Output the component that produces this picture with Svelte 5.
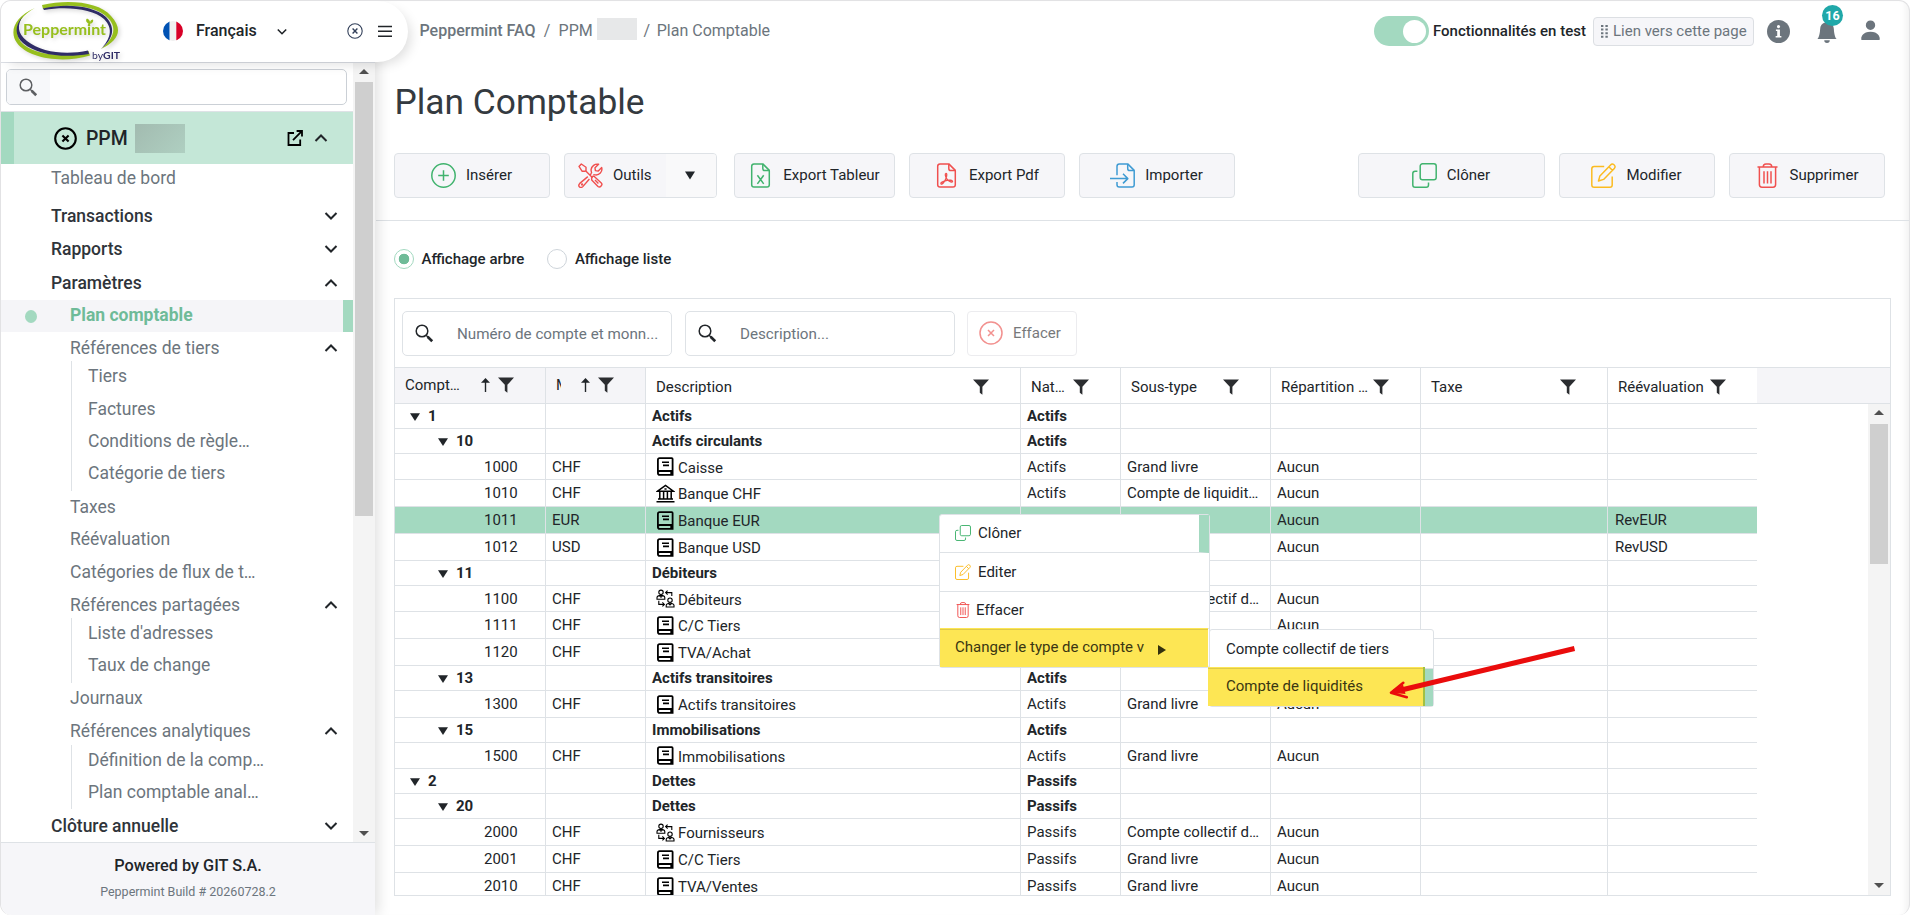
<script>
  const menu = [
    { t: 'Tableau de bord', k: 'first' },
    { t: 'Transactions', k: 'top', c: 'down' },
    { t: 'Rapports', k: 'top', c: 'down' },
    { t: 'Paramètres', k: 'top', c: 'up' },
    { t: 'Plan comptable', k: 'sub active' },
    { t: 'Références de tiers', k: 'sub parent', c: 'up', kids: ['Tiers', 'Factures', 'Conditions de règle…', 'Catégorie de tiers'] },
    { t: 'Taxes', k: 'sub' },
    { t: 'Réévaluation', k: 'sub' },
    { t: 'Catégories de flux de t…', k: 'sub' },
    { t: 'Références partagées', k: 'sub parent', c: 'up', kids: ["Liste d'adresses", 'Taux de change'] },
    { t: 'Journaux', k: 'sub' },
    { t: 'Références analytiques', k: 'sub parent', c: 'up', kids: ['Définition de la comp…', 'Plan comptable anal…'] },
    { t: 'Clôture annuelle', k: 'top last', c: 'down' }
  ];

  const leftButtons = [
    { t: 'Insérer', i: 'plus', k: '' },
    { t: 'Outils', i: 'tools', k: 'split' },
    { t: 'Export Tableur', i: 'xls', k: 'wide' },
    { t: 'Export Pdf', i: 'pdf', k: '' },
    { t: 'Importer', i: 'import', k: '' }
  ];
  const rightButtons = [
    { t: 'Clôner', i: 'copy', k: 'wider' },
    { t: 'Modifier', i: 'edit', k: '' },
    { t: 'Supprimer', i: 'trash', k: '' }
  ];

  const columns = [
    { t: 'Compt…', k: 'sorted code' },
    { t: 'M', k: 'sorted cur' },
    { t: 'Description', k: '' },
    { t: 'Nat…', k: '' },
    { t: 'Sous-type', k: '' },
    { t: 'Répartition …', k: '' },
    { t: 'Taxe', k: '' },
    { t: 'Réévaluation', k: '' }
  ];

  const g = (level, code, desc, nat) => ({ level, code, cur: '', desc, nat, sub: '', rep: '', rev: '', h: 25 });
  const a = (code, cur, icon, desc, nat, sub, h = 27, rev = '') => ({ level: 3, code, cur, icon, desc, nat, sub, rep: 'Aucun', rev, h });
  const rows = [
    g(1, '1', 'Actifs', 'Actifs'),
    g(2, '10', 'Actifs circulants', 'Actifs'),
    a('1000', 'CHF', 'book', 'Caisse', 'Actifs', 'Grand livre', 26),
    a('1010', 'CHF', 'bank', 'Banque CHF', 'Actifs', 'Compte de liquidit…'),
    a('1011', 'EUR', 'book', 'Banque EUR', 'Actifs', 'Grand livre', 27, 'RevEUR'),
    a('1012', 'USD', 'book', 'Banque USD', 'Actifs', 'Grand livre', 27, 'RevUSD'),
    g(2, '11', 'Débiteurs', 'Actifs'),
    a('1100', 'CHF', 'people', 'Débiteurs', 'Actifs', 'Compte collectif d…', 26),
    a('1111', 'CHF', 'book', 'C/C Tiers', 'Actifs', 'Grand livre'),
    a('1120', 'CHF', 'book', 'TVA/Achat', 'Actifs', 'Grand livre'),
    g(2, '13', 'Actifs transitoires', 'Actifs'),
    a('1300', 'CHF', 'book', 'Actifs transitoires', 'Actifs', 'Grand livre'),
    g(2, '15', 'Immobilisations', 'Actifs'),
    a('1500', 'CHF', 'book', 'Immobilisations', 'Actifs', 'Grand livre', 26),
    g(1, '2', 'Dettes', 'Passifs'),
    g(2, '20', 'Dettes', 'Passifs'),
    a('2000', 'CHF', 'people', 'Fournisseurs', 'Passifs', 'Compte collectif d…'),
    a('2001', 'CHF', 'book', 'C/C Tiers', 'Passifs', 'Grand livre'),
    a('2010', 'CHF', 'book', 'TVA/Ventes', 'Passifs', 'Grand livre')
  ];
</script>

{#snippet chevron(dir)}
  <svg class="chev" viewBox="0 0 14 10" width="14" height="10"><path d={dir === 'up' ? 'M1.5 8 7 2.5 12.5 8' : 'M1.5 2 7 7.5 12.5 2'} fill="none" stroke="#212529" stroke-width="2" /></svg>
{/snippet}

{#snippet magnifier(color)}
  <svg width="19" height="19" viewBox="0 0 19 19" fill="none" stroke={color}><circle cx="7" cy="7" r="5.8" stroke-width="1.5" /><path d="M11 11.2 13 13" stroke-width="1.4" /><path d="M12.6 12.8 17.2 17.3" stroke-width="2.6" /></svg>
{/snippet}

{#snippet funnel()}
  <svg class="funnel" width="16" height="16" viewBox="0 0 16 16"><path d="M0 0.5H16L9.4 7.8V15.8L6.8 13.8V7.8Z" fill="#2b2d30" /></svg>
{/snippet}

{#snippet icon(name, size)}
  <svg class="ico" width={size} height={size} viewBox="0 0 25 25" fill="none" stroke-width="1.5">
    {#if name === 'plus'}
      <g stroke="#41b36e"><circle cx="12.5" cy="12.5" r="11.7" /><path d="M12.5 7.2V17.8M7.2 12.5H17.8" /></g>
    {:else if name === 'tools'}
      <g stroke="#f0504f" stroke-width="1.4" stroke-linejoin="round">
        <path d="M1 3.4 3.3 1 8 4.3V7.6L6.9 8.3H4.2Z" />
        <path d="M7.8 8 14.6 14.8" />
        <path d="M13.7 15.6C13.2 14 14.3 13 16 13.3L23.3 19.9C25.2 21.8 22 25.2 20 23.4L13.7 17Z" />
        <path d="M17 17 20.4 20.4" />
        <path d="M13.6 10.2 13 6.8C13.6 3 16.8 .6 20.6 1.3L17 4.8 17.4 7.6 20.3 8.1 23.7 4.6C24.8 8.8 21.2 12.5 17.2 11.9L15.3 11.6" />
        <path d="M13.6 10.2 11.9 11.9M9.8 13.6 1.8 20.4C-.8 23.2 2.6 26 4.8 23.6L11.4 16" />
        <circle cx="4.1" cy="21.4" r=".5" />
      </g>
    {:else if name === 'xls'}
      <g stroke="#41b36e" stroke-linejoin="round"><path d="M14.8 .9H6Q3.7 .9 3.7 3.2V21.8Q3.7 24.1 6 24.1H19Q21.3 24.1 21.3 21.8V7.4Z" /><path d="M14.8 .9V5.5Q14.8 7.6 16.8 7.6H21.3" /><path d="M9.4 12.3 15.7 20.9M15.7 12.3 9.4 20.9" /></g>
    {:else if name === 'pdf'}
      <g stroke="#f0504f" stroke-linejoin="round"><path d="M14.8 .9H6Q3.7 .9 3.7 3.2V21.8Q3.7 24.1 6 24.1H19Q21.3 24.1 21.3 21.8V7.4Z" /><path d="M14.8 .9V5.5Q14.8 7.6 16.8 7.6H21.3" /><path stroke-width="1.3" d="M12 10.3C10.6 10.6 11.5 14 12.6 15.6 14 17.8 17.8 20 18.5 18.6 19 17.2 15 16.7 12 17.6 9 18.4 6.2 19.8 7 20.8 8.2 22.2 11 18 12 15.6 12.8 13.4 13.2 10.2 12 10.3Z" /></g>
    {:else if name === 'import'}
      <g stroke="#3f9bd3" stroke-linejoin="round"><path d="M7 12.2V3.2Q7 .9 9.3 .9H17.7L24.2 7.4V21.8Q24.2 24.1 22 24.1H9.3Q7 24.1 7 21.8V19" /><path d="M17.7 .9V5.5Q17.7 7.6 19.7 7.6H24" /><path d="M0 15.6H17.8M13 10.8 17.8 15.6 13 20.4" /></g>
    {:else if name === 'copy'}
      <g stroke="#41b36e"><rect x="8.2" y=".8" width="16" height="16" rx="2.3" /><path d="M5.4 8.3H3.1Q.8 8.3 .8 10.6V21.9Q.8 24.2 3.1 24.2H14.2Q16.5 24.2 16.5 21.9V19.6" /></g>
    {:else if name === 'edit'}
      <g stroke="#fbbb21" stroke-linejoin="round"><path d="M13.2 3.6H3.1Q.8 3.6 .8 5.9V21.9Q.8 24.2 3.1 24.2H18.9Q21.2 24.2 21.2 21.9V13.6" /><path d="M19.6 1.9Q21.2 .2 23 1.8 25 3.6 23.3 5.4L12.6 16.4 7.5 18 8.9 12.9ZM17.8 3.8 21.4 7.3" /></g>
    {:else if name === 'trash'}
      <g stroke="#f0504f"><path d="M2.5 4H22.5M8.2 4Q8.2 .9 11 .9H14Q16.8 .9 16.8 4M4.4 4V21.5Q4.4 24.2 7 24.2H18Q20.6 24.2 20.6 21.5V4" /><path d="M9 8.3V20.4M12.5 8.3V20.4M16 8.3V20.4" /></g>
    {/if}
  </svg>
{/snippet}

{#snippet kind(name)}
  <svg class="kind" width="19" height="19" viewBox="0 0 19 19" fill="none" stroke="#000">
    {#if name === 'book'}
      <path d="M3.6 1.2H15.8Q16.6 1.2 16.6 2V17.8H3.8Q1.9 17.8 1.9 15.9V3Q1.9 1.2 3.6 1.2ZM2 15.6Q2 14 3.8 14H16.6M15.2 14V17.8" stroke-width="1.8" /><path d="M6 5.2H13M7 8.4H13" stroke-width="1.6" />
    {:else if name === 'bank'}
      <path d="M1.6 7.2 9.5 1.4 17.4 7.2ZM3.8 8V14.6M7.6 8V14.6M11.4 8V14.6M15.2 8V14.6M2 15H17M.5 17.8H18.5" stroke-width="1.5" /><path d="M8.4 5H10.6" stroke-width="1.4" />
    {:else}
      <g stroke-width="1.1"><circle cx="5" cy="3.3" r="2.2" /><path d="M1 10.2V8.6Q1.2 6.4 5 6.4 8.6 6.4 8.8 8.6V10.2ZM3.4 6.6 5 8.2 6.6 6.6" /><circle cx="14" cy="11.2" r="2.2" /><path d="M10.2 18V16.4Q10.4 14.3 14 14.3 17.8 14.3 18 16.4V18ZM12.4 14.4 14 16 15.6 14.4" /><path d="M15.8 7V3.6H9.8M11.6 1.6 9.6 3.6 11.6 5.6M2.8 11.8V15.4H8M6.4 13.4 8.4 15.4 6.4 17.4" /></g>
    {/if}
  </svg>
{/snippet}

<div class="page">
  <aside>
    <header class="brand">
      <svg class="logo" width="125" height="62" viewBox="0 0 125 62">
        <path d="M41 4C68-2 98 1 110 15 123 29 117 40 100 48 112 38 117 27 107 17 95 4 66 2 42 8Z" fill="#97bf1e" />
        <path d="M42 7.500C66 2 93 5 105 16 116 28 111 39 100 48 109 38 113 28 103 18 92 8 66 5 43 9Z" fill="#2f2c66" />
        <path d="M34 7C13 16 8 31 16 42 27 57 60 63 89 54.500L87.500 50C63 57 31 54 20 41 12 30 16 17 34 7Z" fill="#97bf1e" />
        <path d="M22 15C13 25 14 35 22 42 37 55 65 57 88 53L87 49.500C66 54 41 52 26 40 16 32 16 24 22 15Z" fill="#2f2c66" />
        <text x="22" y="34" font-family="Lato" font-weight="700" font-size="16" textLength="83" lengthAdjust="spacingAndGlyphs" fill="#97bf1e">Peppermint</text>
        <path d="M89 24Q83 20 86 17.500 90 19 89 24ZM89.500 23Q88 19 92 18.500 93 21 89.500 23Z" fill="#97bf1e" />
        <text x="91" y="58" font-family="Lato" font-size="10" textLength="28" lengthAdjust="spacingAndGlyphs" fill="#2f2c66">by<tspan font-weight="700">GIT</tspan></text>
      </svg>
      <svg class="flag" width="20" height="20" viewBox="0 0 20 20"><clipPath id="disc"><circle cx="10" cy="10" r="10" /></clipPath><g clip-path="url(#disc)"><path d="M0 0H6.7V20H0Z" fill="#0052b4" /><path d="M6.700 0H13.300V20H6.700Z" fill="#f0f0f0" /><path d="M13.300 0H20V20H13.300Z" fill="#d80027" /></g></svg>
      <span class="lang">Français</span>
      <svg class="langchev" width="10" height="8" viewBox="0 0 10 8"><path d="M.8 1.5 5 5.7 9.2 1.5" fill="none" stroke="#212529" stroke-width="1.6" /></svg>
      <svg class="close" width="16" height="16" viewBox="0 0 16 16" fill="none" stroke="#33405a"><circle cx="8" cy="8" r="7.2" stroke-width="1.1" /><path d="M5.6 5.6 10.4 10.4M10.4 5.6 5.6 10.4" stroke-width="1.4" /></svg>
      <svg class="burger" width="14" height="14" viewBox="0 0 14 14"><path d="M0 2.500H14M0 7.300H14M0 12.200H14" stroke="#212529" stroke-width="1.5" /></svg>
    </header>

    <div class="navwrap">
      <nav>
        <div class="searchbar"><div class="field"><span class="addon">{@render magnifier('#5d5f62')}</span></div></div>
        <div class="company">
          <svg width="23" height="23" viewBox="0 0 23 23" fill="none" stroke="#000" stroke-width="2.1"><circle cx="11.5" cy="11.5" r="10.3" /><path d="M8.400 8.400 14.600 14.600M14.600 8.400 8.400 14.600" /></svg>
          <span class="name">PPM</span><span class="mask"></span>
          <svg class="ext" width="16" height="16" viewBox="0 0 16 16" fill="none" stroke="#000" stroke-width="1.8"><path d="M7 3H1.5V15H13.2V9.5M6 10.2 14.6 1.4M9.6 1H15V6.4" /></svg>
          {@render chevron('up')}
        </div>
        {#each menu as m}
          <div class="item {m.k}"><span>{m.t}</span>{#if m.c}{@render chevron(m.c)}{/if}</div>
          {#if m.kids}
            <div class="kids">{#each m.kids as kid}<div class="kid">{kid}</div>{/each}</div>
          {/if}
        {/each}
      </nav>
      <div class="bar side"><i class="up"></i><b></b><i class="down"></i></div>
    </div>
    <footer><strong>Powered by GIT S.A.</strong><small>Peppermint Build # 20260728.2</small></footer>
  </aside>

  <main>
    <div class="topbar">
      <div class="crumbs"><b>Peppermint FAQ</b><span>/</span><em>PPM</em><i class="mask"></i><span>/</span><em>Plan Comptable</em></div>
      <div class="toggle"><i></i></div>
      <span class="test">Fonctionnalités en test</span>
      <div class="link"><svg width="7" height="13" viewBox="0 0 7 13" fill="#6c757d"><path d="M0 0H2.4V2H0ZM4.4 0H6.8V2H4.4ZM0 3.6H2.4V5.6H0ZM4.4 3.6H6.8V5.6H4.4ZM0 7.2H2.4V9.2H0ZM4.4 7.2H6.8V9.2H4.4ZM0 10.8H2.4V12.8H0ZM4.4 10.8H6.8V12.8H4.4Z" /></svg>Lien vers cette page</div>
      <svg class="info" width="23" height="23" viewBox="0 0 16 16" fill="#6c757d"><circle cx="8" cy="8" r="8" /><path d="M6.2 6.6H9V11.2H10V12.2H6V11.2H7.1V7.6H6.2Z" fill="#fff" /><circle cx="8" cy="4.6" r="1.1" fill="#fff" /></svg>
      <div class="bell"><svg width="22" height="22" viewBox="0 0 16 16" fill="#6c757d"><path d="M8 16a2 2 0 0 0 2-2H6a2 2 0 0 0 2 2m.995-14.901a1 1 0 1 0-1.99 0A5 5 0 0 0 3 6c0 1.098-.5 6-2 7h14c-1.5-1-2-5.902-2-7 0-2.42-1.72-4.44-4.005-4.901" /></svg><span class="badge">16</span></div>
      <svg class="person" width="25" height="25" viewBox="0 0 16 16" fill="#6c757d"><path d="M2.200 14s-.1 0-.1-1 1-4.200 5.900-4.200 5.900 3.200 5.900 4.200-.1 1-.1 1zM8 7.600a3 3 0 1 0 0-6 3 3 0 0 0 0 6" /></svg>
    </div>

    <h1>Plan Comptable</h1>

    <div class="toolbar">
      {#each leftButtons as b}
        <button class={b.k}>{@render icon(b.i, 25)}<span>{b.t}</span>{#if b.k === 'split'}<u><svg width="10" height="9" viewBox="0 0 10 9"><path d="M0 .5H10L5 8.5Z" fill="#212529" /></svg></u>{/if}</button>
      {/each}
      <div class="fill"></div>
      {#each rightButtons as b}
        <button class={b.k}>{@render icon(b.i, 25)}<span>{b.t}</span></button>
      {/each}
    </div>

    <div class="views">
      <label><i class="radio on"></i>Affichage arbre</label>
      <label><i class="radio"></i>Affichage liste</label>
    </div>

    <section>
      <div class="filters">
        <div class="query">{@render magnifier('#212529')}<span>Numéro de compte et monn...</span></div>
        <div class="query">{@render magnifier('#212529')}<span>Description...</span></div>
        <div class="clear"><svg width="24" height="24" viewBox="0 0 24 24" fill="none" stroke="#f2918f" stroke-width="1.5"><circle cx="12" cy="12" r="11" /><path d="M9 9 15 15M15 9 9 15" /></svg>Effacer</div>
      </div>
      <div class="grid head">
        {#each columns as c}
          <div class="th {c.k}"><span>{c.t}</span>{#if c.k}<svg class="arrow" width="9" height="14" viewBox="0 0 9 14"><path d="M4.500 14V3" stroke="#212529" stroke-width="1.400" /><path d="M0 4.800 4.500 0 9 4.800Z" fill="#212529" /></svg>{/if}{@render funnel()}</div>
        {/each}
      </div>
      <div class="body">
        <div class="rows">
          {#each rows as r}
            <div class="grid row lv{r.level}" class:sel={r.code === '1011'} style:height="{r.h}px">
              <div class="num">{#if r.level < 3}<svg width="10" height="8" viewBox="0 0 10 8"><path d="M0 .3H10L5 8Z" fill="#212529" /></svg>{/if}{r.code}</div>
              <div>{r.cur}</div>
              <div class="desc">{#if r.icon}{@render kind(r.icon)}{/if}{r.desc}</div>
              <div>{r.nat}</div><div>{r.sub}</div><div>{r.rep}</div><div></div><div>{r.rev}</div>
            </div>
          {/each}
        </div>
        <div class="bar table"><i class="up"></i><b></b><i class="down"></i></div>
      </div>
    </section>
  </main>

  <div class="menu">
    <div class="entry hover">{@render icon('copy', 16)}Clôner</div>
    <div class="entry">{@render icon('edit', 16)}Editer</div>
    <div class="entry tight">{@render icon('trash', 16)}Effacer</div>
    <div class="entry mark">Changer le type de compte v<svg class="next" width="8" height="10" viewBox="0 0 8 10"><path d="M0 0 8 5 0 10Z" fill="#33300f" /></svg></div>
  </div>
  <div class="menu submenu">
    <div class="entry">Compte collectif de tiers</div>
    <div class="entry mark end">Compte de liquidités</div>
  </div>
  <svg class="pointer" width="200" height="62" viewBox="0 0 200 62" fill="none" stroke="#ea0c0c"><path d="M14 51.700 194.500 8.500" stroke-width="5" /><path d="M23.300 42.800 11 52.700 26.800 57.200" stroke-width="2.600" stroke-linecap="round" stroke-linejoin="round" /><path d="M11 52.700 23 44.500 25.500 54Z" fill="#ea0c0c" stroke="none" /></svg>
</div>

<style>
  :global(body) { margin: 0; background: #fff; }
  * { box-sizing: border-box; }
  .page { position: relative; width: 1910px; height: 915px; display: flex; overflow: hidden; font: 15px Roboto, sans-serif; color: #212529; border: 1px solid #e2e2e4; border-bottom: 0; border-radius: 11px; background: #fff; }
  svg { flex: none; display: block; }
  aside { position: relative; z-index: 2; width: 374px; height: 914px; flex: none; display: flex; flex-direction: column; background: #fff; box-shadow: 3px 0 14px rgba(0, 0, 0, .13); border-bottom-left-radius: 11px; }
  .brand { position: relative; z-index: 1; width: 407px; height: 61px; flex: none; display: flex; align-items: center; background: #fff; border-radius: 11px 31px 31px 0; box-shadow: 6px 5px 12px -3px rgba(0, 0, 0, .13); padding-bottom: 2px; }
  .logo { filter: drop-shadow(2px 2px 2px rgba(0, 0, 0, .15)); margin-top: 2px; }
  .flag { margin-left: 37px; }
  .lang { font-weight: 500; font-size: 16px; margin-left: 13px; width: 81px; }
  .langchev { margin-top: 2px; }
  .close { margin-left: 60px; margin-right: 15px; }
  .burger { margin-top: 1px; }
  .navwrap { flex: 1; display: flex; overflow: hidden; border-top: 1px solid #dcdfe5; }
  nav { width: 352px; }
  .searchbar { height: 49px; padding: 6px 6px 0 5px; border-bottom: 1px solid #dee2e6; }
  .field { height: 36px; border: 1px solid #cbd0d6; border-radius: 5px; overflow: hidden; }
  .addon { width: 43px; height: 100%; background: #f7f8fa; display: flex; align-items: center; padding-left: 12px; }
  .company { height: 52px; display: flex; align-items: center; background: #c4e7d7; border-left: 13px solid #a3d9c0; padding: 0 25px 0 40px; }
  .name { font-size: 19.4px; font-weight: 500; margin-left: 9px; width: 48px; }
  .mask { width: 50px; height: 29px; margin-left: 1px; background: linear-gradient(135deg, #a2bbb0, #afcfc1); }
  .ext { margin: 0 11px 0 auto; }
  .item { height: 32.5px; display: flex; align-items: center; justify-content: space-between; font-size: 17.5px; color: #6c757d; padding: 0 15px 0 69px; white-space: nowrap; }
  .item.sub { padding-bottom: 1px; }
  .item.first { height: 35px; padding: 0 0 7px 50px; }
  .item.top { height: 33.600px; padding-left: 50px; color: #2f343a; font-weight: 500; }
  .item.last { height: 34px; }
  .item.active { height: 32px; background: linear-gradient(#a3d9c0, #a3d9c0) right / 10px 100% no-repeat #f5f5f8; color: #6fbb98; font-weight: 700; justify-content: flex-start; padding-left: 24px; padding-bottom: 1px; }
  .item.active::before { content: ''; width: 12px; height: 13px; border-radius: 50%; background: #a3d9c0; margin: 2px 33px 0 0; }
  .item.parent { height: 29.500px; padding-top: 3px; padding-bottom: 0; }
  .kids { margin-left: 70px; border-left: 1px solid #dee2e6; }
  .kid { height: 32.400px; line-height: 30px; font-size: 17.5px; color: #6c757d; padding-left: 16px; white-space: nowrap; }
  .bar { width: 22px; flex: none; background: #f4f4f4; display: flex; flex-direction: column; align-items: center; }
  .bar b { width: 18px; background: #cfcfcf; }
  .bar i { border: 5px solid transparent; width: 0; height: 0; border-top-width: 0; }
  .bar .up { border-bottom: 5px solid #505050; }
  .bar .down { border-bottom-width: 0; border-top: 5px solid #505050; margin-top: auto; }
  .side .up { margin: 6px 0 8px; }
  .side b { height: 434px; }
  .side .down { margin-bottom: 6px; }
  footer { height: 73px; flex: none; background: #f6f6f9; border-top: 1px solid #dee2e6; display: flex; flex-direction: column; align-items: center; border-bottom-left-radius: 11px; }
  footer strong { font-size: 16.300px; font-weight: 500; line-height: 22px; margin-top: 12px; }
  footer small { font-size: 12.500px; color: #6c757d; line-height: 16px; margin-top: 7px; }

  main { flex: 1; display: flex; flex-direction: column; padding: 0 18px 0 1px; box-shadow: inset -8px 0 8px -6px rgba(0, 0, 0, .07); }
  .topbar { height: 60px; display: flex; align-items: center; padding: 0 0 1px 43.500px; flex: none; }
  .crumbs { display: flex; align-items: center; font-size: 16px; color: #6c757d; width: 954.500px; padding-bottom: 1px; }
  .crumbs b { font-weight: 500; }
  .crumbs em { font-style: normal; }
  .crumbs span { width: 23px; text-align: center; }
  .crumbs .mask { width: 40px; height: 22px; margin: -2px 0 0 4px; background: #e7e8e9; }
  .crumbs .mask + span { width: 20px; }
  .toggle { width: 55px; height: 30px; border-radius: 15px; background: #a3d9c0; padding: 3.5px 3.5px; margin-top: 1px; }
  .toggle i { display: block; width: 23px; height: 23px; border-radius: 50%; background: #fff; margin-left: auto; }
  .test { margin-left: 4px; width: 160px; font-weight: 500; white-space: nowrap; }
  .link { width: 161px; height: 29px; flex: none; display: flex; align-items: center; gap: 5px; padding-left: 7px; border: 1px solid #dcdfe3; border-radius: 4px; background: #f6f6f9; color: #6c757d; white-space: nowrap; margin-top: 1px; }
  .link svg { margin-top: 1px; }
  .info { margin: 1px 0 0 13px; }
  .bell { position: relative; margin: 2px 0 0 26px; }
  .badge { position: absolute; left: 6px; top: -16px; width: 21px; height: 21px; border-radius: 50%; background: #20a8a9; color: #fff; font-weight: 700; font-size: 12.5px; line-height: 21px; text-align: center; }
  .person { margin-left: 20px; }
  h1 { margin: 17px 0 0 18.500px; font-size: 35.300px; font-weight: 400; line-height: 48px; color: #343a40; height: 48px; }
  .toolbar { height: 95px; display: flex; padding: 27px 24px 0 18px; border-bottom: 1px solid #dee2e6; margin-right: -18px; }
  button { width: 156px; height: 45px; font: 15px Roboto, sans-serif; color: #212529; background: #f6f6f9; border: 1px solid #dee2e6; border-radius: 4px; display: flex; align-items: center; justify-content: center; gap: 10px; padding: 0 1px 0 0; margin-right: 14px; white-space: nowrap; }
  button > span { padding-bottom: 2px; }
  button.split { width: 153px; justify-content: flex-start; padding: 0 0 0 13px; margin-right: 17px; overflow: hidden; }
  button.wide { width: 161px; }
  button.wider { width: 187px; }
  button:last-child { margin-right: 0; }
  u { margin-left: auto; width: 50px; height: 100%; background: #f9f9fa; display: flex; align-items: center; padding-left: 19px; padding-bottom: 1px; }
  .fill { flex: 1; }
  .views { height: 77px; display: flex; gap: 23px; padding: 0 0 2px 18px; align-items: center; }
  label { display: flex; align-items: center; gap: 7.500px; font-weight: 500; }
  .radio { width: 20px; height: 20px; border: 1px solid #ced4da; border-radius: 50%; margin-top: 1px; }
  .radio.on { border-color: #a3d9c0; background: radial-gradient(circle, #6fbb98 5px, #fff 5.600px); }
  section { margin-left: 18px; width: 1497px; height: 598px; border: 1px solid #dee2e6; display: flex; flex-direction: column; }
  .filters { height: 68px; padding: 12px 0 0 7px; display: flex; }
  .query { width: 270px; height: 45px; border: 1px solid #dee2e6; border-radius: 5px; display: flex; align-items: center; padding-left: 12px; color: #6c757d; margin-right: 13px; }
  .query span { margin: 0 0 0 23px; font-size: 15.200px; white-space: nowrap; }
  .clear { width: 110px; height: 45px; border: 1px solid #ececef; border-radius: 4px; display: flex; align-items: center; gap: 10px; padding: 0 0 2px 11px; color: #77797b; margin-left: -1px; }
  .grid { display: grid; grid-template-columns: 151px 100px 375px 100px 150px 150px 187px 149px; }
  .head { height: 37px; flex: none; background: #f5f5f8; border-top: 1px solid #dee2e6; border-bottom: 1px solid #dee2e6; }
  .th { display: flex; align-items: center; justify-content: space-between; background: #fff; border-right: 1px solid #dee2e6; padding: 3px 31px 0 10px; white-space: nowrap; }
  .th:last-child { border-right: 0; }
  .th.sorted { background: #f5f5f8; padding-top: 0; padding-bottom: 1px; }
  .sorted .arrow { margin: 0 8px 0 auto; }
  .cur span { width: 5px; overflow: hidden; }
  .body { flex: 1; display: flex; justify-content: space-between; overflow: hidden; }
  .rows { height: 492px; overflow: hidden; }
  .row > div { border-right: 1px solid #dee2e6; border-bottom: 1px solid #dee2e6; display: flex; align-items: center; padding-left: 6px; white-space: nowrap; overflow: hidden; }
  .row > div:last-child { border-right: 0; padding-left: 7px; }
  .row .desc { padding-left: 9.500px; padding-top: 2px; gap: 3.500px; }
  .row .num { padding-left: 89px; }
  .lv1, .lv2 { font-weight: 700; }
  .row.lv1 .num, .row.lv2 .num { padding-left: 15px; gap: 8px; }
  .row.lv2 .num { padding-left: 43px; }
  .row.lv1 .desc, .row.lv2 .desc { padding: 0 0 0 6px; }
  .num svg { margin-top: 2px; }
  .kind { margin-top: -2px; }
  .sel { background: #a3d9c0; }
  .table .up { margin: 6px 0 9px; }
  .table b { height: 140px; }
  .table .down { margin-bottom: 7px; }

  .menu { position: absolute; z-index: 3; left: 938px; top: 513px; width: 271px; background: #fff; border: 1px solid #dee2e6; border-radius: 3px; }
  .submenu { left: 1208px; top: 628px; width: 225px; }
  .entry { height: 39px; border-bottom: 1px solid #dee2e6; display: flex; align-items: center; gap: 7px; padding: 0 0 1px 15px; white-space: nowrap; }
  .entry:first-child { height: 38px; }
  .submenu .entry:first-child { height: 39px; padding-left: 16px; }
  .hover { border-right: 10px solid #a3d9c0; }
  .tight { gap: 5px; height: 37px; }
  .menu .mark { height: 39px; background: linear-gradient(#dfca49, #dfca49) 0 1px / 100% 1px no-repeat #fde654; color: #3a3612; border-bottom: 0; margin: -1px 1px 0 0; }
  .menu .end { position: relative; margin: -2px 8px 0 -2px; padding-left: 18px; border-right: 2px solid #a0c044; }
  .end::after { content: ''; position: absolute; left: 100%; margin-left: 2px; top: 2px; width: 8px; height: 37px; background: #a3d9c0; }
  .next { margin: 5px 0 0 7px; }
  .pointer { position: absolute; z-index: 4; left: 1379px; top: 639px; }
</style>
